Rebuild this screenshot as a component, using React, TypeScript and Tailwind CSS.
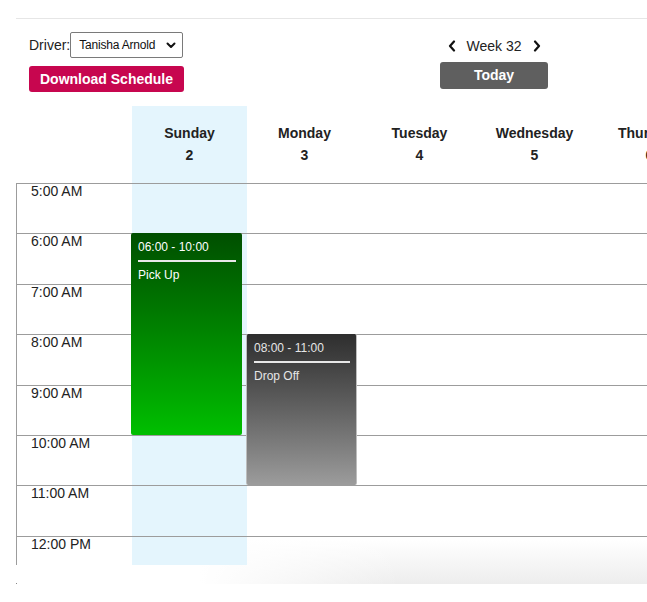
import React from "react";

const days = [
  { name: "Sunday", num: "2", highlight: true },
  { name: "Monday", num: "3" },
  { name: "Tuesday", num: "4" },
  { name: "Wednesday", num: "5" },
  { name: "Thursday", num: "6" },
];

const hours = ["5:00 AM", "6:00 AM", "7:00 AM", "8:00 AM", "9:00 AM", "10:00 AM", "11:00 AM", "12:00 PM"];

const ROW = 50.4;

type Ev = { day: number; start: number; end: number; time: string; label: string; kind: "green" | "gray" };
const events: Ev[] = [
  { day: 0, start: 6, end: 10, time: "06:00 - 10:00", label: "Pick Up", kind: "green" },
  { day: 1, start: 8, end: 11, time: "08:00 - 11:00", label: "Drop Off", kind: "gray" },
];

function Chevron({ dir }: { dir: "left" | "right" | "down" }) {
  if (dir === "down") {
    return (
      <svg width="10" height="7" viewBox="0 0 10 7">
        <path d="M1.5 1.5 L5 5 L8.5 1.5" fill="none" stroke="#111" strokeWidth="2" strokeLinecap="round" strokeLinejoin="round" />
      </svg>
    );
  }
  return (
    <svg width="8" height="12" viewBox="0 0 8 12">
      <path
        d={dir === "left" ? "M6 1.5 L2 6 L6 10.5" : "M2 1.5 L6 6 L2 10.5"}
        fill="none"
        stroke="#111"
        strokeWidth="2.2"
        strokeLinecap="round"
        strokeLinejoin="round"
      />
    </svg>
  );
}

export default function App() {
  return (
    <div className="relative isolate w-[647px] h-[602px] overflow-hidden bg-white font-['Liberation_Sans',Arial,sans-serif] text-[#222]">
      {/* bottom fade (behind content) */}
      <div className="absolute -z-10 left-[200px] top-[540px] w-[447px] h-[44px] bg-[linear-gradient(to_right,#ffffff,rgba(255,255,255,0)_45%),linear-gradient(to_bottom,rgba(255,255,255,0),#ededed)]" />
      <div className="absolute left-[16px] top-[583px] w-[1px] h-[1px] bg-[#888]" />

      <div className="h-[18px]" />
      <div className="ml-[16px] border-t border-[#e6e6e6]" />

      {/* Controls */}
      <div className="flex h-[87px]">
        <div className="w-[440px] pl-[29px] pt-[13px]">
          <div className="flex items-center h-[26px]">
            <span className="text-[14px] text-[#222]">Driver:</span>
            <div className="flex items-center justify-between w-[113px] h-[26px] border border-[#7a7a7a] rounded-[2px] pl-[8px] pr-[6px] bg-white">
              <span className="text-[12px] text-[#111] tracking-[-0.2px]">Tanisha Arnold</span>
              <Chevron dir="down" />
            </div>
          </div>
          <div className="mt-[8px] w-[155px] h-[26px] rounded-[3px] bg-[#c7064f] flex items-center justify-center text-white font-bold text-[14px]">
            Download Schedule
          </div>
        </div>
        <div className="w-[108px] flex flex-col items-center pt-[19px]">
          <div className="flex items-center h-[16px]">
            <Chevron dir="left" />
            <span className="text-[14px] text-[#222] mx-[11px]">Week 32</span>
            <Chevron dir="right" />
          </div>
          <div className="mt-[8px] w-[108px] h-[27px] rounded-[3px] bg-[#5f5f5f] flex items-center justify-center text-white font-bold text-[14px]">
            Today
          </div>
        </div>
      </div>

      {/* Calendar */}
      <div className="flex ml-[16px]">
        <div className="w-[116px] shrink-0">
          <div className="h-[77px]" />
          <div className="h-[382px] overflow-hidden border-l border-[#9c9c9c]">
            {hours.map((h) => (
              <div key={h} className="border-t border-[#9c9c9c] pl-[14px] text-[14px] text-[#222] leading-[15px]" style={{ height: ROW }}>
                {h}
              </div>
            ))}
          </div>
        </div>
        {days.map((d, di) => (
          <div key={d.name} className={`w-[115px] shrink-0 ${d.highlight ? "bg-[#e4f5fd]" : ""}`}>
            <div className="h-[77px] pt-[16px] flex flex-col items-center font-bold text-[14px] leading-[22px] text-[#222]">
              <div>{d.name}</div>
              <div>{d.num}</div>
            </div>
            <div className="relative h-[382px]">
              <div className="h-[382px] overflow-hidden">
                {hours.map((h) => (
                  <div key={h} className="border-t border-[#9c9c9c]" style={{ height: ROW }} />
                ))}
              </div>
              {events
                .filter((e) => e.day === di)
                .map((e) => (
                  <div
                    key={e.time}
                    className={`absolute left-[-1px] w-[111px] rounded-[2px] px-[7px] pt-[7px] text-[12px] leading-[14px] ${
                      e.kind === "green"
                        ? "bg-gradient-to-b from-[#004f00] to-[#00bf00] text-white"
                        : "bg-gradient-to-b from-[#2e2e2e] to-[#9c9c9c] text-[#e6e6e6] border-x border-[#bdbdbd]"
                    }`}
                    style={{ top: (e.start - 5) * ROW, height: (e.end - e.start) * ROW }}
                  >
                    <div>{e.time}</div>
                    <div className="mt-[6px] mb-[6px] border-t-2 border-[#e8e8e8] mr-[-1px]" />
                    <div>{e.label}</div>
                  </div>
                ))}
            </div>
          </div>
        ))}
      </div>
    </div>
  );
}
